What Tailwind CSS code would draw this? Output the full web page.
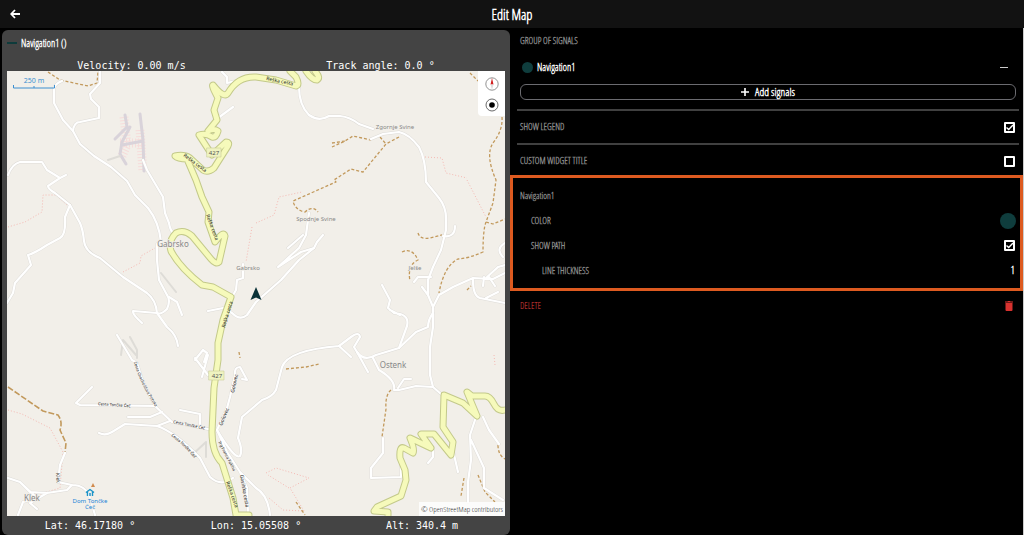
<!DOCTYPE html>
<html lang="en">

<head>
  <meta charset="UTF-8">
  <meta name="viewport" content="width=device-width, initial-scale=1.0">
  <title>Edit Map</title>
  <script src="https://cdn.jsdelivr.net/npm/@tailwindcss/browser@4"></script>
</head>

<body class="bg-black text-white font-['Open_Sans_Condensed_Light','Open_Sans_Condensed','Liberation_Sans_Narrow',sans-serif]">
  <div class="flex flex-col min-h-screen">
    <header class="grid grid-cols-3 items-center h-7 px-2 bg-[#121212]">
      <button type="button" aria-label="Back" class="justify-self-start p-0.5">
        <svg class="size-2.5" viewBox="0 0 10 10" fill="none" stroke="white" stroke-width="1.8">
          <path d="M5 1 L1.200 5 L5 9 M1.200 5 H10" />
        </svg>
      </button>
      <h1 class="text-center text-[14px] font-bold">Edit Map</h1>
    </header>

    <main class="grid grid-cols-2 flex-1">
      <!-- Widget preview -->
      <section class="flex flex-col m-0.5 mb-0 px-[5px] rounded-md bg-[#444]">
        <div class="flex items-center gap-1 h-[26px] text-[10px] font-bold">
          <span class="w-2.5 h-0.5 bg-[#0e3b3b]"></span>
          Navigation1 ()
        </div>
        <div class="grid grid-cols-2 h-[15px] items-end text-center leading-[10px] text-[10px] font-['DejaVu_Sans_Mono',monospace]">
          <span>Velocity: 0.00 m/s</span>
          <span>Track angle: 0.0 °</span>
        </div>

        <div class="relative flex-1 bg-[#f2efe9] overflow-hidden">
          <svg class="absolute inset-0 size-full" viewBox="7 71 498 445" preserveAspectRatio="xMidYMid slice"
            fill="none" stroke-linecap="round" stroke-linejoin="round">
            <defs>
              <g id="roads">
                <path d="M100,71 V83 L90,94 L91,99 L99,107 V118 L80,122 Q74,122 73,131" />
                <path d="M62,81 Q54,84 54,90 L54,103 L63,120 L73,131 L80,144 L94,156 L111,167 L127,181 L135,195 L148,208 Q159,222 161,242 L157,244 V260 L159,280 L167,295 Q171,300 167,309 Q161,315 157,313 L133,311 Q132,314 142,323" />
                <path d="M169,297 L177,302 L182,315" />
                <path d="M8,175 Q12,164 20,162 L42,162 L47,170 L60,178 L48,186 Q48,189 55,193 L70,205 L80,223 Q83,230 84,241 Q85,252 100,258 L123,277 L147,293 Q156,300 157,313 L167,327 Q177,335 178,346" />
                <path d="M60,178 L66,175" />
                <path d="M70,205 L65,217 Q66,235 60,238 L47,245 Q35,253 28,255 L31,265 L15,283 L13,293 L7,303" />
                <path d="M143,160 L147,170 L163,197 L165,213 L169,223 Q170,231 175,235" />
                <path d="M208,311 L223,308 L232,313 Q240,321 247,315 L256,302 L281,280 L299,260 L314,248 L317,242 L323,235" />
                <path d="M314,248 L301,252 L278,267 L299,248 L306,235 L308,220 L309,213 M288,248 L303,235" />
                <path d="M232,297 L236,290 L237,280 L243,278 V264" />
                <path d="M222,72 L227,77 V83 L236,81 M218,118 L233,107" />
                <path d="M299,87 Q299,105 309,115 Q319,122 329,116 H340 Q350,117 359,124 L373,129" />
                <path d="M371,139 L383,134 L399,132 Q409,134 419,147 Q426,160 426,182 L439,198 Q447,208 446,222 V230 L441,250 L433,267 L428,280 V295 L433,307 V327 L430,347 V375 L433,387 L441,394" />
                <path d="M433,387 L416,386 L399,390 H394 Q396,380 379,370 L373,358 M398,388 L404,379 H411" />
                <path d="M443,236 Q455,238 455,226 M431,277 H418 L414,282 M428,295 L422,287" />
                <path d="M433,307 L439,295 L453,287 L473,278 L493,279 L505,273 M505,243 Q495,249 503,257 M486,278 L498,267 L505,265 M473,280 Q473,296 480,298 L505,303 M486,298 L498,292 M489,277 L495,286 M484,277 L483,286" />
                <path d="M382,285 L390,300 L388,308 L394,313 Q410,314 407,326 L399,348 M390,310 L400,315" />
                <path d="M433,313 Q428,320 428,327 L416,332 L399,348 L376,355 Q364,362 357,352 L354,347 L360,337 Q359,331 351,337 L339,346 Q288,350 282,367 L276,390 Q272,397 262,400 L242,417 L238,438 Q243,450 240,456 Q235,460 217,430" />
                <path d="M339,346 L351,357 M357,352 L368,372" />
                <path d="M92,387 L76,403 L80,405 L155,406 L172,422 L213,430 M128,417 L150,417 L162,412" />
                <path d="M99,433 Q106,436 112,432 L125,424 L157,426 Q175,432 200,458 L210,477 Q218,484 225,482 L233,478 M157,426 L170,421" />
                <path d="M117,335 L132,360 L137,363 L143,382 L155,406" />
                <path d="M180,410 L200,414 V427 M195,358 L208,375 M208,355 L202,377 M195,360 L203,350 L207,353 L204,362" />
                <path d="M217,430 L227,408 L230,397 L235,375 Q234,367 240,367 L247,380 L242,379" />
                <path d="M217,430 L227,452 L240,472 L247,488 L248,515 M240,472 L256,488 Q268,495 270,515" />
                <path d="M8,478 L20,482 L30,492 L47,493 L67,490 L72,485 Q86,485 90,498 L95,515 M20,482 L37,498 L23,502 L18,515 M47,493 L30,503 L37,509 M72,485 L58,482 L60,465 L65,453" />
                <path d="M401,463 V477 L371,478 V468 L383,453 V438 M433,447 V457 L428,463 M453,450 L458,472" />
                <path d="M476,417 L470,435 L471,460 L468,482 L468,502 M471,440 L484,468 V488 L503,500 M483,417 L489,430 L499,444" />
              </g>
              <g id="main-road">
                <path d="M290,71 L296,77 Q300,85 296,86 L276,80 L256,77 Q238,76 228,93 Q224,99 213,85 Q211,85 218,98 L214,110 L217,120 L208,131 Q214,128 218,131 Q216,138 212,137 Q206,133 199,135 L212,155 L226,142 Q230,142 228,146 L214,168 Q208,173 203,170 L190,158 Q184,154 175,156 Q178,159 187,159 L196,180 L202,197 L209,212 L208,222 L215,242 Q224,230 225,236 L219,262 Q216,265 211,259 L192,236 Q184,229 176,233 Q168,241 171,251 Q180,268 202,285 L213,287 L231,297 L223,320 L218,343 V360 L214,388 L212,432 Q212,453 222,463 L233,498 L236,515 H249" />
                <path d="M306,71 Q312,80 317,80 Q321,78 315,71" />
                <path d="M388,515 V512 L374,511 L377,507 L401,496 L406,480 L405,470 L400,458 Q399,446 404,448 L413,453 Q415,450 410,438 L431,448 L421,434 H434 L451,455 L453,442 L443,427 L444,395 L463,403 L477,416 L467,392 L472,396 H485 Q490,396 494,404 T505,410" />
              </g>
              <path id="label-a" d="M266,80 L300,87" />
              <path id="label-b" d="M183,156 L210,176" />
              <path id="label-c" d="M206,215 L219,250" />
              <path id="label-d" d="M225,328 L235,294" />
              <path id="label-e" d="M226,482 L238,516" />
              <path id="label-f" d="M98,405 L140,408" />
              <path id="label-g" d="M173,423 L216,432" />
              <path id="label-h" d="M171,436 Q186,446 202,468" />
              <path id="label-i" d="M134,362 Q139,384 164,420" />
              <path id="label-j" d="M234,393 L239,370" />
              <path id="label-k" d="M222,426 L231,404" />
              <path id="label-l" d="M218,442 L240,484" />
              <path id="label-m" d="M240,475 L247,515" />
              <path id="label-n" d="M56,473 L57,488" />
            </defs>

            <!-- industrial plot -->
            <g stroke="#f6dcda" stroke-width="9" stroke-dasharray="1 2" stroke-linecap="butt">
              <path d="M124,117 L127,145 L121,158 M140,130 L143,172 M120,143 H142" />
            </g>
            <g stroke="#d9d3da" stroke-width="3">
              <path d="M125,115 L127,127 L115,139 M130,127 L122,142 L120,154 L126,164 M140,114 L143,140 L144,171 M122,145 L143,141" />
            </g>
            <g stroke="#dedcd7" stroke-width="2">
              <path d="M161,273 L176,292 M121,355 L123,340 L136,355 M130,337 L137,350 V358 M192,455 L206,442 L206,457 M108,160 L120,156" />
            </g>

            <!-- paths -->
            <g stroke="#f5b9b3" stroke-dasharray="1 2" stroke-linecap="butt">
              <path d="M8,227 L25,222 L42,212 L43,195 L56,195 L68,206 M123,272 L140,263 L141,256 L155,248 M252,227 L246,262 M425,157 L442,158 L446,173 L467,178 M256,223 L274,215 L279,197 L302,192 M467,180 L486,217 M8,410 L22,414 L50,428 L63,452 L60,488 L40,494 M266,473 L276,468 L309,478 L290,488 L304,511 L283,510 L269,498 M289,488 L268,475 M494,355 L495,365" />
            </g>
            <g stroke="#c2995c" stroke-width="1.300" stroke-dasharray="3 2" stroke-linecap="butt">
              <path d="M48,72 L60,80 L88,86 L97,83 L98,72" />
              <path d="M332,147 L345,141 L353,136 L371,140 M332,143 L345,141 M399,137 L386,144 L363,172 L351,169 L334,180 L336,182 L293,201 Q295,210 305,212 Q313,205 318,212 M380,137 L386,144" />
              <path d="M470,73 L478,81 M502,117 Q503,130 493,143 Q485,155 496,180 L493,203 L486,222 Q483,230 483,252 Q470,258 458,259 Q444,266 439,293 M486,222 L493,224 L505,219" />
              <path d="M418,233 Q420,240 430,238 L442,235 M402,252 Q412,247 418,260 Q407,265 410,281 M467,290 L471,286" />
              <path d="M286,369 L306,367 L319,364 M391,390 Q385,395 386,409 L382,437 M498,445 Q498,455 505,459 M478,475 L485,492 L495,502 M464,478 L461,496 M296,502 L305,515 M239,352 L240,358" />
              <path d="M8,387 L43,411 L58,415 Q63,422 60,430 L66,443 L65,453" stroke-width="1.600" stroke-dasharray="6 2" />
            </g>

            <use href="#roads" stroke="#dddbd7" stroke-width="3" />
            <use href="#roads" stroke="white" stroke-width="2.200" />
            <use href="#main-road" stroke="#c3c98a" stroke-width="7" />
            <use href="#main-road" stroke="#f6fabb" stroke-width="5" />

            <g fill="#eff3c0" stroke="#c9ce98" stroke-width="0.600">
              <rect x="207" y="148" width="14" height="9" />
              <rect x="209" y="371" width="15" height="9" />
            </g>

            <g fill="#555" text-anchor="middle" font-family="Noto Sans, sans-serif" font-size="6">
              <text x="214" y="155">427</text>
              <text x="217" y="378">427</text>
            </g>
            <g fill="#222" font-family="Noto Sans, sans-serif" font-size="5">
              <text><textPath href="#label-a">Reška cesta</textPath></text>
              <text><textPath href="#label-b">Reška cesta</textPath></text>
              <text><textPath href="#label-c">Reška cesta</textPath></text>
              <text><textPath href="#label-d">Reška cesta</textPath></text>
              <text><textPath href="#label-e">Reška cesta</textPath></text>
              <text><textPath href="#label-j">Golovec</textPath></text>
              <text><textPath href="#label-k">Golovec</textPath></text>
              <text><textPath href="#label-m">Gasilska cesta</textPath></text>
              <text><textPath href="#label-n">Klek</textPath></text>
            </g>
            <g fill="#222" font-family="Noto Sans, sans-serif" font-size="4">
              <text><textPath href="#label-f">Cesta Tončke Čeč</textPath></text>
              <text><textPath href="#label-g">Cesta Tončke Čeč</textPath></text>
              <text><textPath href="#label-h">Cesta Tončke Čeč</textPath></text>
              <text><textPath href="#label-i">Cesta Chocholdove Potoka</textPath></text>
              <text><textPath href="#label-l">Trg Franca Fakina</textPath></text>
            </g>

            <g fill="#888" stroke="#f2efe9" stroke-width="1.500" paint-order="stroke" text-anchor="middle"
              font-family="Noto Sans, sans-serif">
              <text x="173" y="247" font-size="8">Gabrsko</text>
              <text x="248" y="270" font-size="6">Gabrsko</text>
              <text x="395" y="129" font-size="6">Zgornje Svine</text>
              <text x="316" y="221" font-size="6">Spodnje Svine</text>
              <text x="415" y="270" font-size="6">Jelše</text>
              <text x="393" y="368" font-size="8">Ostenk</text>
              <text x="32" y="501" font-size="8">Klek</text>
              <g fill="#1a84d8" font-size="6">
                <text x="90" y="503">Dom Tončke</text>
                <text x="90" y="509">Čeč</text>
              </g>
            </g>

            <!-- mountain hut and peak -->
            <path d="M86,492.500 L90,489.500 L94,492.500 M87.500,492 V496 M92.500,492 V496 M90,493 V496" stroke="#1a93c8" stroke-width="1.400" stroke-linecap="butt" />
            <path d="M91,487 L93,483 L95,487 Z" fill="#d08a4e" />

            <!-- vehicle position -->
            <path d="M256,287 L261.500,300 L256,297.500 L250.500,300 Z" fill="#0a3238" />
          </svg>

          <div class="absolute left-1.5 top-1.5 w-[42px] text-center text-[7px] leading-2 text-[#3c8fd0] font-['Noto_Sans',sans-serif]">
            250 m
            <svg class="block w-full h-1" viewBox="0 0 42 4" fill="none" stroke="#3c8fd0">
              <path d="M0.500 0 V3 H41.500 V0 M21 1 V3" />
            </svg>
          </div>

          <div class="absolute right-0 top-0 flex flex-col items-center gap-[7px] w-[27px] pt-1.5 pb-1 rounded-bl bg-white">
            <button type="button" aria-label="Reset north" class="size-3.5">
              <svg viewBox="0 0 14 14" fill="none">
                <circle cx="7" cy="7" r="6.200" stroke="#777" stroke-width="0.800" />
                <path d="M7 1 L8.500 7.500 H5.500 Z" fill="#d21f1f" />
                <path d="M7 13 L8.500 7.500 H5.500 Z" fill="#ddd" />
              </svg>
            </button>
            <button type="button" aria-label="Center on position" class="size-3.5">
              <svg viewBox="0 0 14 14" fill="none">
                <circle cx="7" cy="7" r="6" stroke="#444" stroke-width="0.800" />
                <circle cx="7" cy="7" r="2.800" fill="black" />
              </svg>
            </button>
          </div>

          <div class="absolute right-0 bottom-0 px-0.5 bg-white/80 text-[8px] leading-[14px] text-[#333]">© OpenStreetMap contributors</div>
        </div>

        <div class="grid grid-cols-3 h-[19px] items-center text-center text-[10px] font-['DejaVu_Sans_Mono',monospace]">
          <span>Lat: 46.17180 °</span>
          <span>Lon: 15.05508 °</span>
          <span>Alt: 340.4 m</span>
        </div>
      </section>

      <!-- Settings -->
      <form class="border-r border-[#ccc] -ml-0.5 text-[9px] font-bold text-[#8c8c8c]">
        <div class="ml-2.5 mr-[7px]">
          <h2 class="h-[26px] leading-[26px]">GROUP OF SIGNALS</h2>
          <div class="flex items-center gap-1 h-[26px] pl-0.5 text-[10px] text-white">
            <span class="size-[11px] rounded-full bg-[#0f3d3d]"></span>
            Navigation1
            <button type="button" aria-label="Remove Navigation1" class="ml-auto mr-2 py-1">
              <span class="block w-2 h-px bg-[#ccc]"></span>
            </button>
          </div>
          <button type="button"
            class="flex items-center justify-center gap-1.5 w-full h-4 mt-1 border border-[#6b6b70] rounded-md text-[11px] text-white">
            <svg class="size-2" viewBox="0 0 8 8" stroke="white" stroke-width="1.600"><path d="M4 0 V8 M0 4 H8" /></svg>
            Add signals
          </button>
        </div>

        <div class="mt-[9px] ml-[7px] mr-1 border-t-2 border-[#404040]">
          <div class="flex items-center justify-between h-8 pl-[3px] pr-1">
            <label for="showLegend">SHOW LEGEND</label>
            <span class="relative flex">
              <input id="showLegend" type="checkbox" checked class="peer appearance-none size-[11px] border-2 border-white rounded-[1px]">
              <svg class="absolute inset-0 size-[11px] hidden pointer-events-none peer-checked:block" viewBox="0 0 11 11" fill="none" stroke="white" stroke-width="1.400"><path d="M2.500 5.500 L4.700 7.600 L9 3" /></svg>
            </span>
          </div>
        </div>
        <div class="ml-[7px] mr-1 border-t-2 border-[#404040]">
          <div class="flex items-center justify-between h-8 pl-[3px] pr-1">
            <label for="customTitle">CUSTOM WIDGET TITLE</label>
            <input id="customTitle" type="checkbox" class="appearance-none size-[11px] border-2 border-white rounded-[1px]">
          </div>
        </div>

        <fieldset class="-mt-0.5 border-3 border-[#dd5a20] py-[5px] pl-[7px] pr-1">
          <div class="flex items-center h-[25px]">Navigation1</div>
          <div class="flex items-center justify-between h-[25px] pl-[11px]">
            <label for="pathColor">COLOR</label>
            <input id="pathColor" type="color" value="#0f3d3d"
              class="appearance-none size-4 p-0 bg-transparent [&::-webkit-color-swatch-wrapper]:p-0 [&::-webkit-color-swatch]:border-0 [&::-webkit-color-swatch]:rounded-full">
          </div>
          <div class="flex items-center justify-between h-[25px] pl-[11px] pr-px">
            <label for="showPath">SHOW PATH</label>
            <span class="relative flex">
              <input id="showPath" type="checkbox" checked class="peer appearance-none size-[11px] border-2 border-white rounded-[1px]">
              <svg class="absolute inset-0 size-[11px] hidden pointer-events-none peer-checked:block" viewBox="0 0 11 11" fill="none" stroke="white" stroke-width="1.400"><path d="M2.500 5.500 L4.700 7.600 L9 3" /></svg>
            </span>
          </div>
          <div class="flex items-center justify-between h-[25px] pl-[22px] pr-px">
            <label for="thickness">LINE THICKNESS</label>
            <input id="thickness" type="text" inputmode="numeric" value="1" class="w-8 text-right text-[11px] text-white">
          </div>
        </fieldset>

        <button type="button" class="flex items-center justify-between w-full h-[30px] pl-2.5 pr-2.5 font-normal text-[#e0403f]">
          DELETE
          <svg class="w-2 h-2.5" viewBox="0 0 8 10" fill="#d8322f"><path d="M0 0.500 H2.500 L3 0 H5 L5.500 0.500 H8 V1.500 H0 Z M0.500 2 H7.500 V9 Q7.500 10 6.500 10 H1.500 Q0.500 10 0.500 9 Z" /></svg>
        </button>
      </form>
    </main>
  </div>
</body>

</html>
